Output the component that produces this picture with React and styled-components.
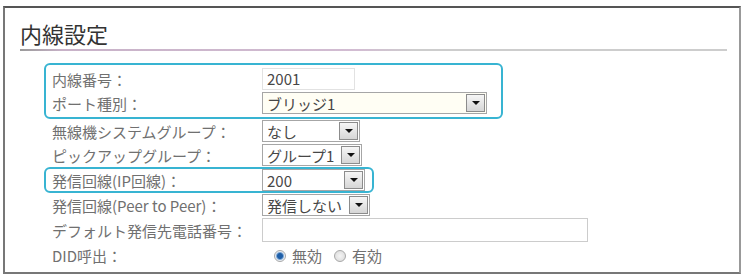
import React from "react";
import styled, { createGlobalStyle } from "styled-components";

const GlobalStyle = createGlobalStyle`
  body {
    margin: 0;
    background: #fff;
    font-family: "Noto Sans CJK JP", "Liberation Sans", sans-serif;
  }
`;

const Frame = styled.div`
  box-sizing: border-box;
  margin: 6px 0 0 3px;
  width: 738px;
  height: 268px;
  border-top: 2px solid #555;
  border-left: 2px solid #777;
  border-right: 2px solid #999;
  border-bottom: 2px solid #777;
  padding: 10px 12px 0 15px;
  overflow: hidden;
`;

const Title = styled.h1`
  margin: 0;
  font-size: 22px;
  line-height: 31px;
  font-weight: normal;
  color: #333;
`;

const Rule = styled.div`
  height: 2px;
  background: linear-gradient(
    to right,
    #9a9a9a 0%,
    #c8b2c8 6%,
    #d2bcd2 48%,
    #cdcdcd 56%,
    #cdcdcd 100%
  );
`;

const Form = styled.div`
  margin: 12px 0 0 24px;
  display: flex;
  flex-direction: column;
  align-items: flex-start;
`;

const Group = styled.div`
  box-sizing: border-box;
  width: ${(p) => (p.$width ? p.$width + "px" : "auto")};
  padding: ${(p) => (p.$hl ? `${p.$pad ?? 2}px 6px` : "0 8px")};
  border: ${(p) => (p.$hl ? "2px solid #38b4d2" : "none")};
  border-radius: 6px;
`;

const Row = styled.div`
  display: grid;
  grid-template-columns: 210px auto;
  align-items: center;
  height: ${(p) => p.$h || 24}px;
`;

const Label = styled.div`
  font-size: 15px;
  color: #707070;
  white-space: nowrap;
`;

const TextBox = styled.div`
  box-sizing: border-box;
  width: ${(p) => p.$w}px;
  height: ${(p) => p.$h || 22}px;
  border: 1px solid ${(p) => p.$border || "#ccc"};
  background: #fff;
  padding-left: 4px;
  font-size: 15px;
  line-height: ${(p) => (p.$h || 22) - 2}px;
  color: #474747;
`;

const Select = styled.div`
  box-sizing: border-box;
  display: flex;
  align-items: center;
  justify-content: space-between;
  width: ${(p) => p.$w}px;
  height: 22px;
  border: 1px solid #a6a6a6;
  background: ${(p) => p.$bg || "#fff"};
  padding-left: 4px;
  font-size: 15px;
  color: #474747;
`;

const DropButton = styled.span`
  box-sizing: border-box;
  width: 19px;
  height: 18px;
  margin-right: 1px;
  border: 1px solid #8c8c8c;
  background: linear-gradient(#f6f6f6, #d6d6d6);
  display: flex;
  align-items: center;
  justify-content: center;

  &::after {
    content: "";
    border-left: 4px solid transparent;
    border-right: 4px solid transparent;
    border-top: 4px solid #111;
  }
`;

const Radios = styled.div`
  display: flex;
  align-items: center;
  gap: 6px;
  padding-left: 12px;
  font-size: 15px;
  color: #707070;
`;

const Radio = styled.span`
  box-sizing: border-box;
  width: 12px;
  height: 12px;
  border-radius: 50%;
  border: 1px solid #a8a8a8;
  background: ${(p) =>
    p.$on
      ? "radial-gradient(circle, #1f5fa8 0 2.5px, #7fa8d4 3.5px, #e8eef5 4.5px)"
      : "radial-gradient(circle, #f4f4f4 0, #d8d8d8 100%)"};
  margin-left: ${(p) => (p.$first ? 0 : 6)}px;
`;

function Dropdown({ value, width, bg }) {
  return (
    <Select $w={width} $bg={bg}>
      <span>{value}</span>
      <DropButton />
    </Select>
  );
}

export default function App() {
  return (
    <>
      <GlobalStyle />
      <Frame>
        <Title>内線設定</Title>
        <Rule />
        <Form>
          <Group $hl $width={459}>
            <Row>
              <Label>内線番号：</Label>
              <TextBox $w={93} $border="#e2e2e2">2001</TextBox>
            </Row>
            <Row>
              <Label>ポート種別：</Label>
              <Dropdown value="ブリッジ1" width={225} bg="#fffef4" />
            </Row>
          </Group>
          <Group>
            <Row>
              <Label>無線機システムグループ：</Label>
              <Dropdown value="なし" width={98} />
            </Row>
            <Row>
              <Label>ピックアップグループ：</Label>
              <Dropdown value="グループ1" width={100} />
            </Row>
          </Group>
          <Group $hl $pad={0} $width={330}>
            <Row $h={22}>
              <Label>発信回線(IP回線)：</Label>
              <Dropdown value="200" width={103} />
            </Row>
          </Group>
          <Group>
            <Row>
              <Label>発信回線(Peer to Peer)：</Label>
              <Dropdown value="発信しない" width={108} />
            </Row>
            <Row $h={26}>
              <Label>デフォルト発信先電話番号：</Label>
              <TextBox $w={326} $h={24} />
            </Row>
            <Row $h={25}>
              <Label>DID呼出：</Label>
              <Radios>
                <Radio $on $first />
                <span>無効</span>
                <Radio />
                <span>有効</span>
              </Radios>
            </Row>
          </Group>
        </Form>
      </Frame>
    </>
  );
}
